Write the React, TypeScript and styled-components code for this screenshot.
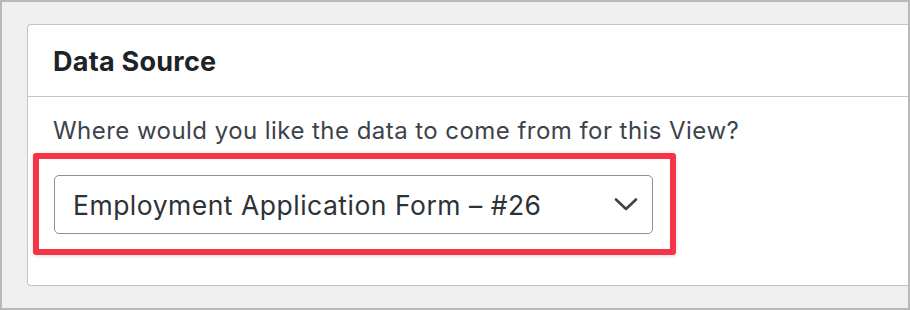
import React from 'react'
import styled, { createGlobalStyle } from 'styled-components'

const GlobalStyle = createGlobalStyle`
  html, body {
    margin: 0;
    padding: 0;
    background: #f0f0f1;
  }
  * {
    box-sizing: border-box;
  }
`

const Frame = styled.div`
  width: 910px;
  height: 310px;
  border: 2px solid #b9b9bb;
  background: #f0f0f1;
  padding: 22px 0 0 25px;
  font-family: Inter, "Noto Sans", "Liberation Sans", sans-serif;
  overflow: hidden;
`

const Card = styled.section`
  background: #fff;
  border: 1px solid #c3c4c7;
  border-right: none;
  border-radius: 4px 0 0 4px;
  height: 262px;
`

const CardHeader = styled.div`
  height: 72px;
  display: flex;
  align-items: center;
  padding-left: 25px;
  border-bottom: 1px solid #c3c4c7;
`

const Title = styled.h2`
  margin: 0;
  font-size: 27px;
  font-weight: 700;
  color: #1d2327;
  letter-spacing: 0.25px;
  line-height: 1;
  padding-top: 2px;
`

const CardBody = styled.div`
  padding: 18px 0 0 25px;
`

const Description = styled.p`
  margin: 0;
  font-size: 24px;
  line-height: 32px;
  letter-spacing: 0.45px;
  color: #3c434a;
`

const Highlight = styled.div`
  display: inline-block;
  margin: 6px 0 0 -20px;
  padding: 16px 17px 15px 15px;
  border: 6px solid #f73447;
  border-radius: 3px;
  box-shadow: 0 1px 4px rgba(0, 0, 0, 0.15);
`

const Select = styled.div`
  width: 599px;
  height: 59px;
  display: flex;
  align-items: center;
  justify-content: space-between;
  padding: 0 14px 0 18px;
  border: 1.5px solid #8c8f94;
  border-radius: 5px;
  background: #fff;
  font-size: 26.5px;
  letter-spacing: 0.5px;
  color: #2c3338;
`

const Chevron = () => (
  <svg width="24" height="15" viewBox="0 0 24 15">
    <polyline
      points="2,2.5 12,12 22,2.5"
      fill="none"
      stroke="#3c434a"
      strokeWidth="2.6"
      strokeLinecap="round"
      strokeLinejoin="round"
    />
  </svg>
)

const App: React.FC = () => {
  return (
    <>
      <GlobalStyle />
      <Frame>
        <Card>
          <CardHeader>
            <Title>Data Source</Title>
          </CardHeader>
          <CardBody>
            <Description>Where would you like the data to come from for this View?</Description>
            <Highlight>
              <Select>
                <span>Employment Application Form – #26</span>
                <Chevron />
              </Select>
            </Highlight>
          </CardBody>
        </Card>
      </Frame>
    </>
  )
}

export default App
